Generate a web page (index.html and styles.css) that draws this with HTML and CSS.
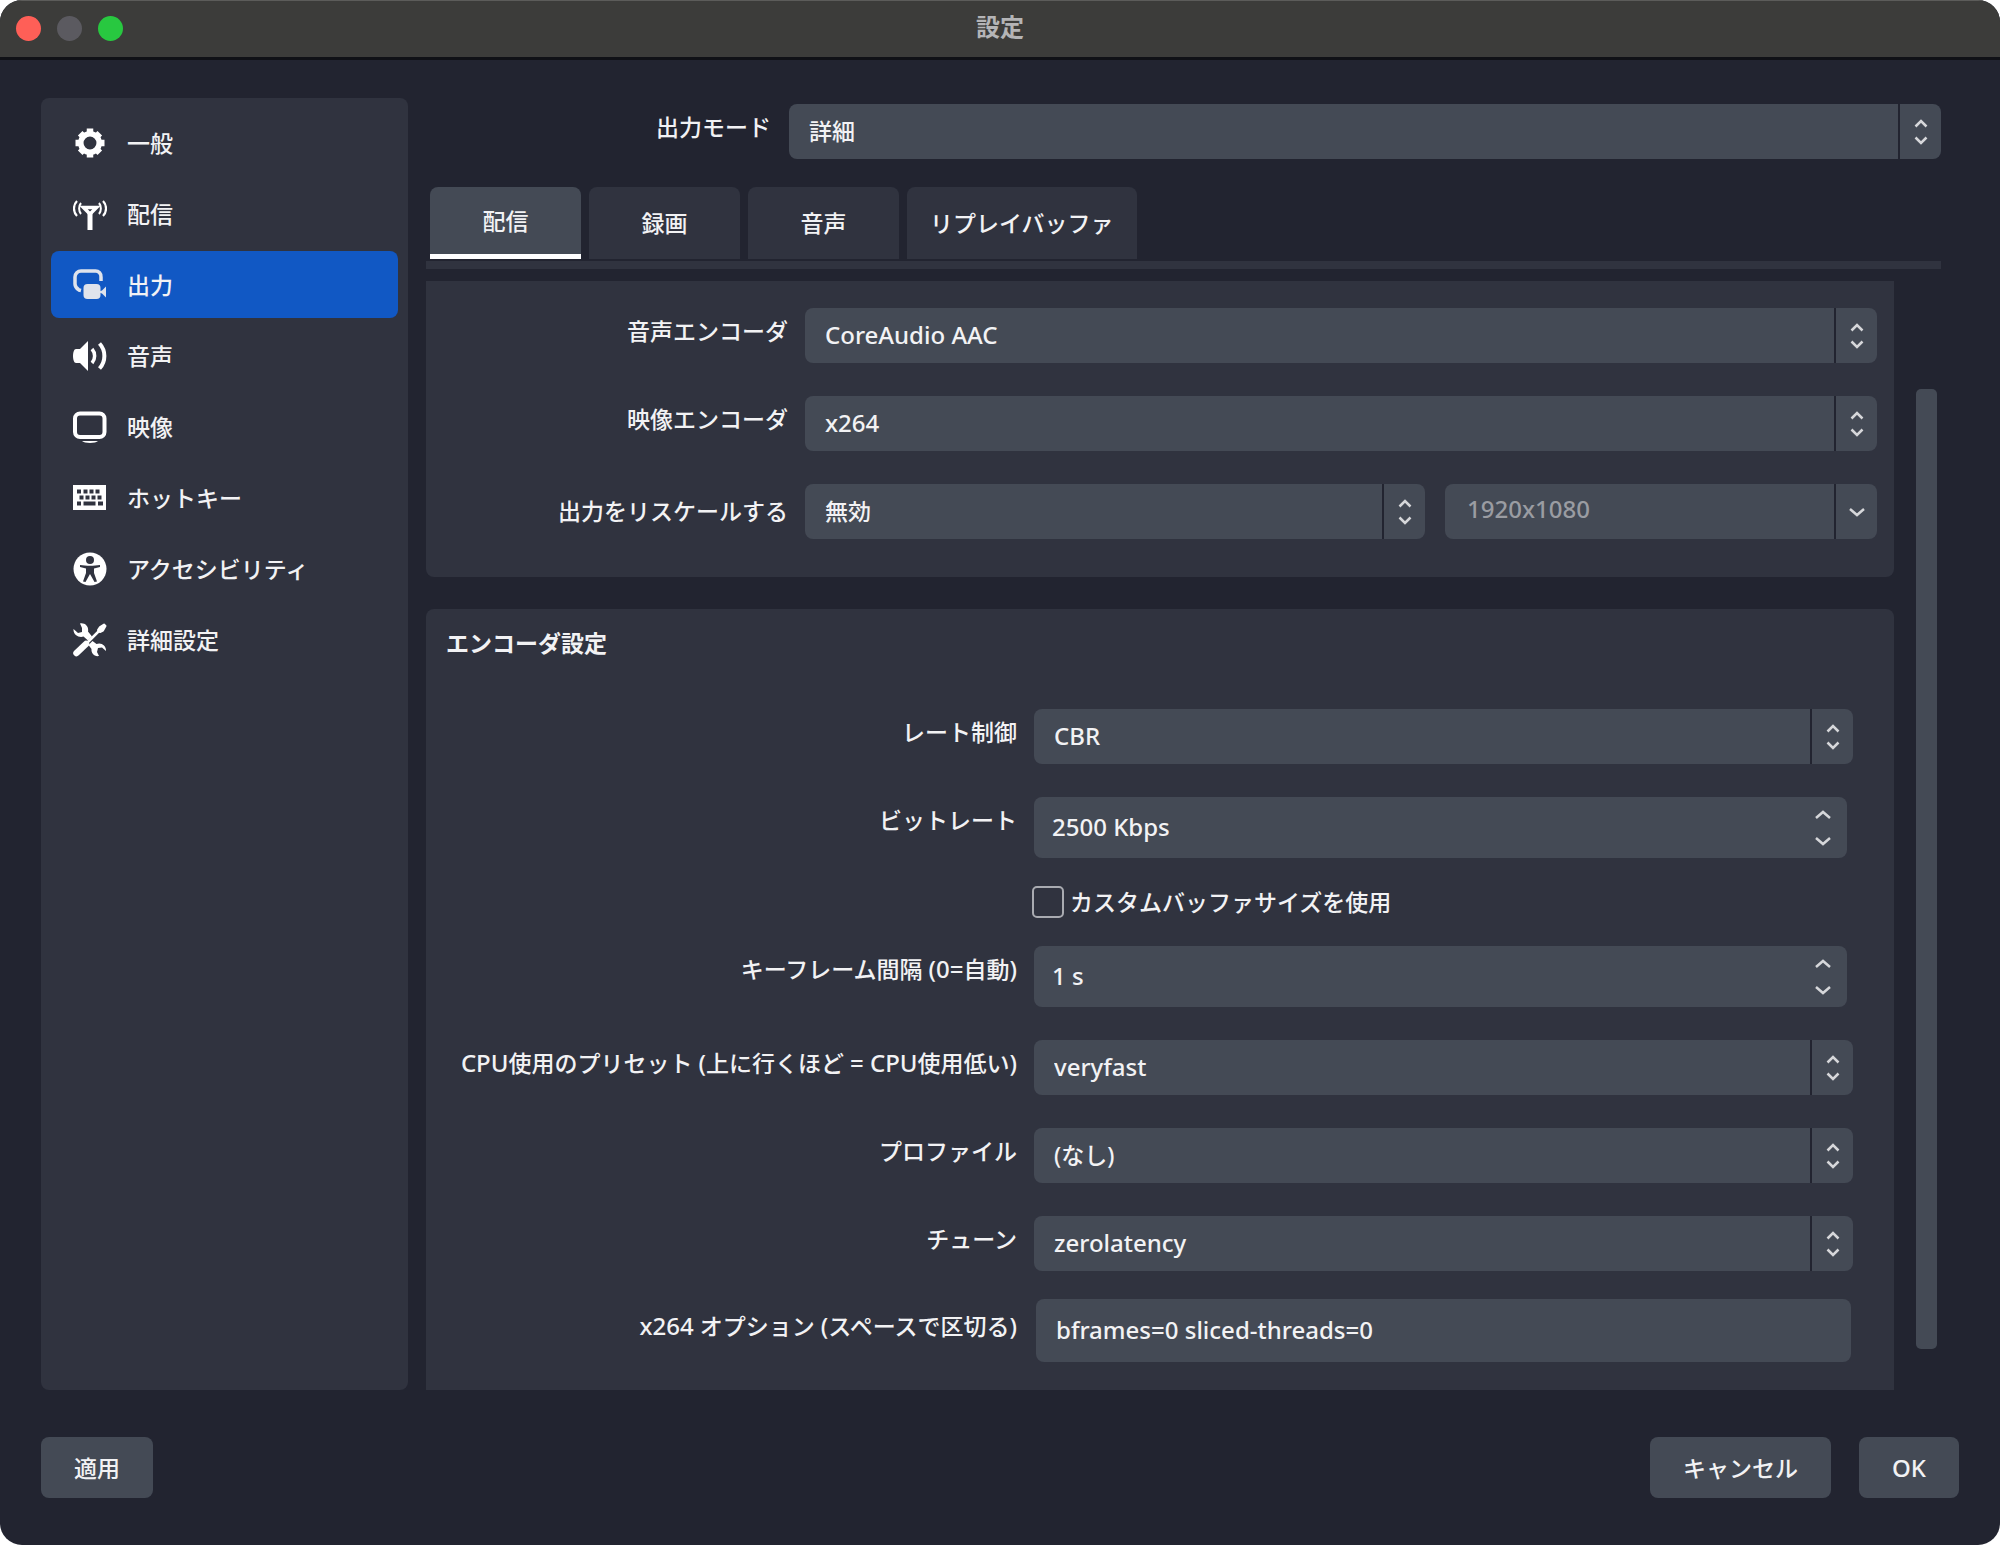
FILE: index.html
```html
<!DOCTYPE html>
<html lang="ja">
<head>
<meta charset="utf-8">
<meta name="viewport" content="width=device-width, initial-scale=1">
<title>設定</title>
<link rel="stylesheet" href="styles.css">
</head>
<body>
<svg class="defs" aria-hidden="true">
  <symbol id="updown" viewBox="0 0 16 28"><path d="M2.500 8.500L8 3l5.500 5.500M2.500 19.500L8 25l5.500-5.500"/></symbol>
  <symbol id="up" viewBox="0 0 18 12"><path d="M2 9l7-6 7 6"/></symbol>
  <symbol id="down" viewBox="0 0 18 12"><path d="M2 3l7 6 7-6"/></symbol>
</svg>
<div class="window">
  <header class="titlebar">
    <div class="lights">
      <button class="light light-close" aria-label="閉じる"></button>
      <button class="light light-min" aria-label="しまう" disabled></button>
      <button class="light light-zoom" aria-label="拡大"></button>
    </div>
    <h1 class="title">設定</h1>
  </header>

  <div class="body">
    <nav class="sidebar">
      <a class="item" href="#general">
        <svg class="icon" viewBox="0 0 34 34"><circle cx="17" cy="17" r="9.200" fill="none" stroke="currentColor" stroke-width="5.500"/><path d="M17 2.500v5M17 26.500v5M2.500 17h5M26.500 17h5M7.200 7.200l3 3M23.800 23.800l3 3M7.200 26.800l3-3M23.800 10.200l3-3" stroke="currentColor" stroke-width="6.500"/></svg>
        一般</a>
      <a class="item" href="#stream">
        <svg class="icon" viewBox="0 0 34 34"><g fill="none" stroke="currentColor"><path d="M10.500 10.500h13l-6.500 6.500z" stroke-width="3.500"/><path d="M17 16v17" stroke-width="5"/><path d="M4 4c-4 4-4 11 0 15M30 4c4 4 4 11 0 15" stroke-width="2.200"/><path d="M8 6c-2.500 3-2.500 8 0 11M26 6c2.500 3 2.500 8 0 11" stroke-width="2"/></g></svg>
        配信</a>
      <a class="item item-active" href="#output" aria-current="page">
        <svg class="icon" viewBox="0 0 34 34"><path d="M8 22.500L6 22Q2 19.500 2 16V9a6 6 0 0 1 6-6h14.500a5.500 5.500 0 0 1 5.500 6v4" fill="none" stroke="currentColor" stroke-width="3.500"/><rect x="10.500" y="16" width="17" height="15" rx="4" fill="currentColor"/><path d="M26 23.500l3-1 4-4v11l-4-4-3-1z" fill="currentColor"/></svg>
        出力</a>
      <a class="item" href="#audio">
        <svg class="icon" viewBox="0 0 34 34"><path d="M3 10h4l8-8v30l-8-8H3c-4 0-4-14 0-14z" fill="currentColor"/><path d="M19 10c3.500 4 3.500 10 0 14" fill="none" stroke="currentColor" stroke-width="3.500"/><path d="M26.500 4.500c6.500 7 6.500 18 0 25" fill="none" stroke="currentColor" stroke-width="4"/></svg>
        音声</a>
      <a class="item" href="#video">
        <svg class="icon" viewBox="0 0 34 34"><rect x="2" y="3.500" width="29.500" height="23.500" rx="5" fill="none" stroke="currentColor" stroke-width="4"/><path d="M9 31h16c-2 2.500-14 2.500-16 0z" fill="currentColor"/></svg>
        映像</a>
      <a class="item" href="#hotkeys">
        <svg class="icon" viewBox="0 0 34 34"><path fill="currentColor" fill-rule="evenodd" d="M0 4h33v25H0zM4 8.500v4h4v-4zM10.500 8.500v4h4v-4zM16.500 8.500v4h4v-4zM22.500 8.500v4h4v-4zM6.500 14.500v4h4v-4zM12.500 14.500v4h4v-4zM18.500 14.500v4h4v-4zM24.500 14.500v4h4v-4zM4 20.500v4h4v-4zM10.500 20.500v4h12v-4zM25 20.500v4h5v-4z"/></svg>
        ホットキー</a>
      <a class="item" href="#accessibility">
        <svg class="icon" viewBox="0 0 34 34"><circle cx="17" cy="17" r="16.500" fill="currentColor"/><circle class="cut" cx="17" cy="8" r="4"/><path class="cut" d="M7 13c6 1 14 1 20 0v2l-6 1.500V21l3 8.500-2.500.5L17 22l-4.500 8-2.500-.5 3-8.500v-4.500L7 15z"/></svg>
        アクセシビリティ</a>
      <a class="item" href="#advanced">
        <svg class="icon" viewBox="0 0 34 34"><path d="M27 7L14 20" stroke="currentColor" stroke-width="2.500"/><path d="M27 4l4-2.500 1.500 1.500L30 7.500l-3 1.500-2-2z" fill="currentColor" stroke="currentColor" stroke-width="2" stroke-linejoin="round"/><path d="M13 21l-9.500 9" stroke="currentColor" stroke-width="6.500" stroke-linecap="round"/><path d="M7 .5c5-1 9 3 8 8l4 5-4 4-4.500-4C6 15 0 12 .5 6l4.500 4 4-1V5zM26 33c-5 1-8-3-7.500-7l-3-4 4-4 4 3c5-2 10 2 9.500 7l-4-3.500-4 .5-1 4z" fill="currentColor"/></svg>
        詳細設定</a>
    </nav>

    <main class="main">
      <div class="mode">
        <label class="label" for="mode">出力モード</label>
        <div class="field">
          <select id="mode"><option>詳細</option></select>
          <span class="arrows"><svg><use href="#updown"/></svg></span>
        </div>
      </div>

      <div class="tabs" role="tablist">
        <button class="tab tab-active" role="tab" aria-selected="true">配信</button>
        <button class="tab" role="tab">録画</button>
        <button class="tab" role="tab">音声</button>
        <button class="tab" role="tab">リプレイバッファ</button>
      </div>

      <div class="scroll">
        <div class="groups">
          <section class="group group-stream">
            <div class="row">
              <label class="label" for="aenc">音声エンコーダ</label>
              <div class="field">
                <select id="aenc" class="latin"><option>CoreAudio AAC</option></select>
                <span class="arrows"><svg><use href="#updown"/></svg></span>
              </div>
            </div>
            <div class="row">
              <label class="label" for="venc">映像エンコーダ</label>
              <div class="field">
                <select id="venc" class="latin"><option>x264</option></select>
                <span class="arrows"><svg><use href="#updown"/></svg></span>
              </div>
            </div>
            <div class="row row-tall-label">
              <label class="label" for="rescale">出力をリスケールする</label>
              <div class="pair">
                <div class="field">
                  <select id="rescale"><option>無効</option></select>
                  <span class="arrows"><svg><use href="#updown"/></svg></span>
                </div>
                <div class="field">
                  <input id="size" class="latin" type="text" value="1920x1080" aria-label="解像度" disabled>
                  <span class="arrows"><svg class="chevron"><use href="#down"/></svg></span>
                </div>
              </div>
            </div>
          </section>

          <section class="group group-encoder">
            <h2 class="heading">エンコーダ設定</h2>
            <div class="row">
              <label class="label" for="rate">レート制御</label>
              <div class="field">
                <select id="rate" class="latin"><option>CBR</option></select>
                <span class="arrows"><svg><use href="#updown"/></svg></span>
              </div>
            </div>
            <div class="row">
              <label class="label" for="bitrate">ビットレート</label>
              <div class="field spin">
                <input id="bitrate" class="latin" type="text" value="2500 Kbps">
                <span class="steps"><button aria-label="増やす"><svg><use href="#up"/></svg></button><button aria-label="減らす"><svg><use href="#down"/></svg></button></span>
              </div>
            </div>
            <div class="row row-check">
              <label class="check"><input type="checkbox">カスタムバッファサイズを使用</label>
            </div>
            <div class="row">
              <label class="label" for="keyint">キーフレーム間隔 <span class="latin">(0=</span>自動<span class="latin">)</span></label>
              <div class="field spin">
                <input id="keyint" class="latin" type="text" value="1 s">
                <span class="steps"><button aria-label="増やす"><svg><use href="#up"/></svg></button><button aria-label="減らす"><svg><use href="#down"/></svg></button></span>
              </div>
            </div>
            <div class="row">
              <label class="label" for="preset"><span class="latin">CPU</span>使用のプリセット <span class="latin">(</span>上に行くほど <span class="latin">= CPU</span>使用低い<span class="latin">)</span></label>
              <div class="field">
                <select id="preset" class="latin"><option>veryfast</option></select>
                <span class="arrows"><svg><use href="#updown"/></svg></span>
              </div>
            </div>
            <div class="row">
              <label class="label" for="profile">プロファイル</label>
              <div class="field">
                <select id="profile"><option>(なし)</option></select>
                <span class="arrows"><svg><use href="#updown"/></svg></span>
              </div>
            </div>
            <div class="row">
              <label class="label" for="tune">チューン</label>
              <div class="field">
                <select id="tune" class="latin"><option>zerolatency</option></select>
                <span class="arrows"><svg><use href="#updown"/></svg></span>
              </div>
            </div>
            <div class="row row-text row-tall-label">
              <label class="label" for="opts"><span class="latin">x264</span> オプション <span class="latin">(</span>スペースで区切る<span class="latin">)</span></label>
              <div class="field">
                <input id="opts" class="latin" type="text" value="bframes=0 sliced-threads=0">
              </div>
            </div>
          </section>
        </div>
        <div class="scrollbar"><div class="thumb"></div></div>
      </div>
    </main>
  </div>

  <footer class="footer">
    <button class="button">適用</button>
    <button class="button button-cancel">キャンセル</button>
    <button class="button"><span class="latin">OK</span></button>
  </footer>
</div>
</body>
</html>
```
FILE: styles.css
```css
:root {
  --bg: #222430;
  --panel: #30333f;
  --field: #444a55;
  --text: #f2f2f4;
  --accent: #1158c4;
}

* {
  box-sizing: border-box;
}

body {
  margin: 0;
  background: #fff;
  color: var(--text);
  font: 500 23px/30px "Noto Sans", "Noto Sans CJK JP", sans-serif;
}

button,
input,
select {
  margin: 0;
  padding: 0;
  border: 0;
  background: none;
  color: inherit;
  font: inherit;
}

.defs {
  display: none;
}

.latin {
  font-size: 24px;
}

.window {
  display: flex;
  flex-direction: column;
  min-height: 100vh;
  border-radius: 22px;
  overflow: hidden;
  background: var(--bg);
}

/* Title bar */
.titlebar {
  display: grid;
  grid-template-columns: 1fr auto 1fr;
  align-items: center;
  height: 60px;
  padding: 0 16px 1px;
  border-top: 1px solid #5c5c5a;
  border-bottom: 3px solid #101116;
  background: #3c3c3a;
}

.lights {
  display: flex;
  gap: 16px;
}

.light {
  width: 25px;
  height: 25px;
  border-radius: 50%;
}

.light-close {
  background: #ff5f57;
}

.light-min {
  background: #5b5a60;
}

.light-zoom {
  background: #28c840;
}

.title {
  margin: 0;
  padding-bottom: 3px;
  color: #b4b4b6;
  font-size: 24px;
  font-weight: 700;
}

.body {
  display: flex;
  flex: 1;
  gap: 18px;
  padding: 38px 59px 0 41px;
}

/* Sidebar */
.sidebar {
  display: flex;
  flex: none;
  flex-direction: column;
  gap: 4px;
  width: 367px;
  padding: 11px 10px;
  border-radius: 8px;
  background: var(--panel);
}

.item {
  display: flex;
  align-items: center;
  gap: 20px;
  height: 67px;
  padding-left: 22px;
  border-radius: 8px;
  color: inherit;
  text-decoration: none;
}

.item-active {
  background: var(--accent);
}

.icon {
  width: 34px;
  height: 34px;
  color: #fff;
}

.item-active .icon {
  color: #dfe3ec;
}

.cut {
  fill: var(--panel);
}

/* Form controls */
.main {
  flex: 1;
  min-width: 0;
  padding-top: 6px;
}

.label {
  line-height: 46px;
  text-align: right;
  white-space: nowrap;
}

.field {
  display: flex;
  flex: 1;
  min-width: 0;
  height: 55px;
  border-radius: 8px;
  background: var(--field);
}

.field select,
.field input {
  flex: 1;
  min-width: 0;
  padding: 0 0 2px 20px;
  appearance: none;
  outline: 0;
}

.field input:disabled {
  padding: 0 0 6px 22px;
  color: #9a9ca2;
  opacity: 1;
}

.arrows {
  display: flex;
  flex: none;
  align-items: center;
  justify-content: center;
  width: 43px;
  border-left: 2px solid var(--bg);
}

.field svg {
  width: 16px;
  height: 28px;
  fill: none;
  stroke: #d6d7da;
  stroke-width: 2.5px;
}

.field .chevron,
.steps svg {
  display: block;
  width: 18px;
  height: 12px;
}

.spin {
  height: 61px;
  margin-right: 6px;
}

.field.spin input {
  padding-left: 18px;
}

.steps {
  display: flex;
  flex-direction: column;
  justify-content: center;
  gap: 14px;
  padding-right: 15px;
}

.mode {
  display: grid;
  grid-template-columns: 345px 1fr;
  gap: 18px;
}

/* Tabs */
.tabs {
  display: flex;
  gap: 8px;
  margin-top: 28px;
  padding: 0 4px 2px;
}

.tab {
  min-width: 151px;
  height: 72px;
  padding: 0 23px;
  border-radius: 8px 8px 0 0;
  background: var(--panel);
}

.tab-active {
  border-bottom: 5px solid #fff;
  background: var(--field);
}

/* Scrolling settings */
.scroll {
  display: flex;
  gap: 22px;
  padding-top: 12px;
  padding-right: 4px;
  border-top: 8px solid var(--panel);
}

.groups {
  flex: 1;
  min-width: 0;
}

.group {
  background: var(--panel);
}

.group-stream {
  padding: 27px 17px 38px 0;
  border-radius: 0 0 8px 8px;
}

.group-encoder {
  margin-top: 32px;
  padding: 19px 41px 28px 0;
  border-radius: 8px 8px 0 0;
}

.heading {
  margin: 0 0 51px;
  padding-left: 20px;
  font-size: 23px;
  font-weight: 700;
}

.row {
  display: grid;
  column-gap: 17px;
}

.group-stream .row {
  grid-template-columns: 362px 1fr;
}

.group-encoder .row {
  grid-template-columns: 591px 1fr;
}

.row + .row {
  margin-top: 33px;
}

.row + .row-check,
.row-check + .row,
.row + .row-text {
  margin-top: 28px;
}

.row-tall-label .label {
  line-height: 54px;
}

.row-text .field {
  height: 63px;
  margin: 0 2px;
}

.pair {
  display: grid;
  grid-template-columns: 620fr 432fr;
  gap: 20px;
}

.check {
  display: flex;
  grid-column: 2;
  align-items: center;
  gap: 6px;
  height: 32px;
  margin-left: -2px;
}

.check input {
  width: 32px;
  height: 32px;
  border: 2px solid #a9abb1;
  border-radius: 5px;
  appearance: none;
}

.scrollbar {
  display: flex;
  width: 21px;
  padding: 108px 0 41px;
}

.thumb {
  flex: 1;
  border-radius: 5px;
  background: var(--field);
}

/* Footer */
.footer {
  display: flex;
  gap: 28px;
  padding: 47px 41px;
}

.button {
  height: 61px;
  padding: 0 33px;
  border-radius: 8px;
  background: var(--field);
}

.button-cancel {
  margin-left: auto;
}
```
